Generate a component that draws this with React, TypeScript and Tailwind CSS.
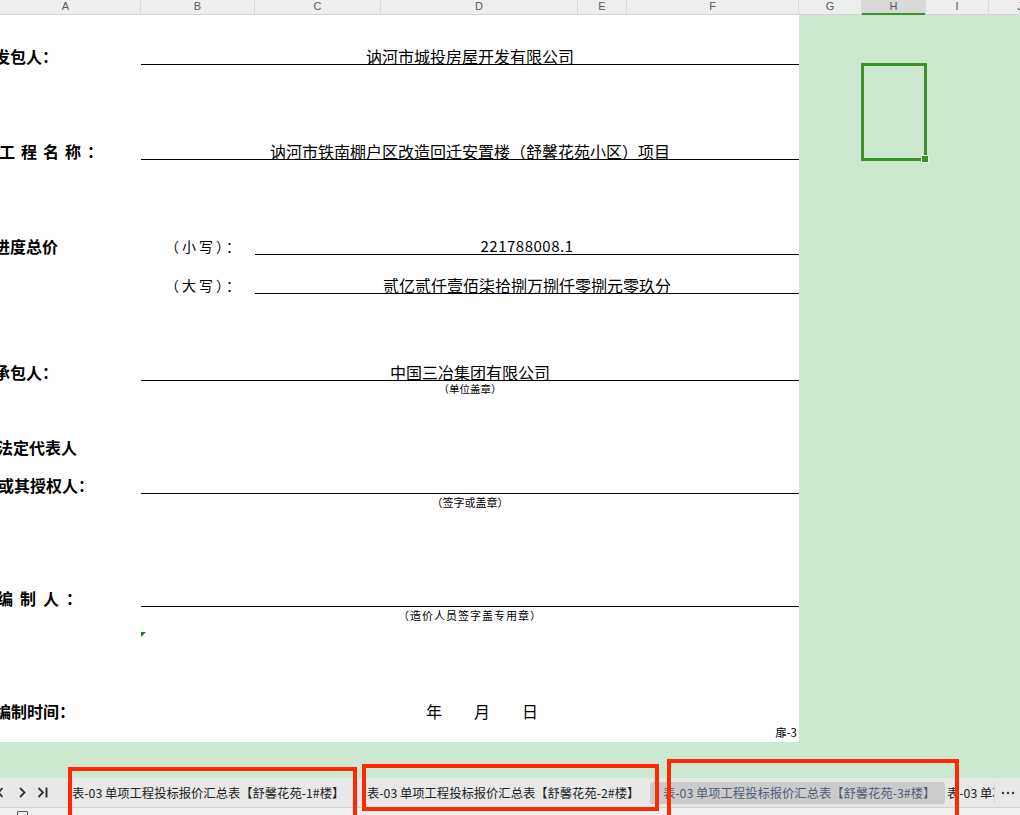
import type { ReactNode } from 'react'

const cjk = "font-['Noto_Sans_CJK_SC','Noto_Sans',sans-serif]"

const columns = [
  { name: 'A', width: 'w-[141px] pr-[9px]' },
  { name: 'B', width: 'w-[114px]' },
  { name: 'C', width: 'w-[126px]' },
  { name: 'D', width: 'w-[197px]' },
  { name: 'E', width: 'w-[49px]' },
  { name: 'F', width: 'w-[172px]' },
  { name: 'G', width: 'w-[63px]' },
  { name: 'H', width: 'w-[64px]', active: true },
  { name: 'I', width: 'w-[63px]' },
  { name: 'J', width: 'w-[63px]' },
]

const tabs = [
  { label: '表-03 单项工程投标报价汇总表【舒馨花苑-1#楼】', box: 'w-[295px] pl-[4px]' },
  { label: '表-03 单项工程投标报价汇总表【舒馨花苑-2#楼】', box: 'w-[283px] pl-[4px] mr-[4px]' },
  {
    label: '表-03 单项工程投标报价汇总表【舒馨花苑-3#楼】',
    box: 'w-[295px] pl-[13px] h-[22px] rounded-[3px] bg-[#cbcbcb] text-[#4f5d78]',
  },
]

function Label({ children }: { children: ReactNode }) {
  return (
    <div className="flex w-[141px] shrink-0 items-end pb-px text-[16px] font-bold leading-[16px] whitespace-nowrap">
      {children}
    </div>
  )
}

function Line({ children }: { children?: ReactNode }) {
  return (
    <div className="flex flex-1 items-end justify-center border-b border-black text-[16px] leading-[16px] whitespace-nowrap">
      {children}
    </div>
  )
}

function Caption({ children, className = '' }: { children: ReactNode; className?: string }) {
  return (
    <div className="flex h-[16px] pl-[141px]">
      <div className={`flex flex-1 items-center justify-center leading-[16px] whitespace-nowrap ${className}`}>
        {children}
      </div>
    </div>
  )
}

function CaseLabel({ children }: { children: ReactNode }) {
  return (
    <div className="flex w-[114px] shrink-0 items-end pb-px pl-[24px] text-[14px] leading-[16px] tracking-[3px] whitespace-nowrap">
      {children}
    </div>
  )
}

function ColumnHeader() {
  return (
    <div className="flex h-[15px] border-b border-[#d4d4d4] bg-[#eeeeee] font-['Liberation_Sans',sans-serif] text-[11px] leading-[12px] text-[#545a66]">
      {columns.map((col) => (
        <div
          key={col.name}
          className={`relative flex shrink-0 justify-center border-r border-[#d9d9d9] ${col.width} ${
            col.active ? 'bg-[#d9d9d9]' : ''
          }`}
        >
          {col.name}
          {col.active ? <div className="absolute right-0 bottom-[-1px] left-0 h-[2px] bg-[#3f8f2a]" /> : null}
        </div>
      ))}
    </div>
  )
}

function SheetBody() {
  return (
    <div className="flex h-[763px] bg-[#cce8cf]">
      <div className={`flex h-[727px] w-[799px] shrink-0 flex-col bg-white text-black ${cjk}`}>
        <div className="flex h-[50px]">
          <Label>
            <span className="-ml-[6px]">发包人：</span>
          </Label>
          <Line>讷河市城投房屋开发有限公司</Line>
        </div>

        <div className="flex h-[95px]">
          <Label>
            <span className="-ml-[1px] tracking-[6px]">工程名称：</span>
          </Label>
          <Line>讷河市铁南棚户区改造回迁安置楼（舒馨花苑小区）项目</Line>
        </div>

        <div className="flex h-[95px]">
          <Label>
            <span className="-ml-[6px]">进度总价</span>
          </Label>
          <CaseLabel>（小写）：</CaseLabel>
          <div className="flex flex-1 items-end justify-center border-b border-black text-[15px] leading-[16px] tracking-[0.5px]">
            221788008.1
          </div>
        </div>

        <div className="flex h-[39px]">
          <div className="w-[141px] shrink-0" />
          <CaseLabel>（大写）：</CaseLabel>
          <Line>贰亿贰仟壹佰柒拾捌万捌仟零捌元零玖分</Line>
        </div>

        <div className="flex h-[87px]">
          <Label>
            <span className="-ml-[6px]">承包人：</span>
          </Label>
          <Line>中国三冶集团有限公司</Line>
        </div>
        <Caption className="text-[10.5px]">（单位盖章）</Caption>

        <div className="flex h-[59px]">
          <Label>
            <span className="-ml-[3px]">法定代表人</span>
          </Label>
        </div>

        <div className="flex h-[38px]">
          <Label>
            <span className="-ml-[2px]">或其授权人：</span>
          </Label>
          <Line />
        </div>
        <Caption className="text-[11px]">（签字或盖章）</Caption>

        <div className="flex h-[97px]">
          <Label>
            <span className="-ml-[3px] tracking-[7px]">编制人：</span>
          </Label>
          <Line />
        </div>
        <Caption className="text-[11px] tracking-[1px]">（造价人员签字盖专用章）</Caption>

        <div className="h-[81px] pt-[9px] pl-[141px]">
          <svg width="5" height="5" viewBox="0 0 5 5">
            <polygon points="0,0 5,0 0,5" fill="#1e7b1e" />
          </svg>
        </div>

        <div className="flex h-[16px]">
          <Label>
            <span className="-ml-[5px]">编制时间：</span>
          </Label>
          <div className="flex items-end gap-[32px] pb-px pl-[285px] text-[16px] leading-[16px]">
            <span>年</span>
            <span>月</span>
            <span>日</span>
          </div>
        </div>

        <div className="flex h-[22px] justify-end pt-[4px] pr-[2px] text-[11.5px] leading-[16px]">扉-3</div>
      </div>

      <div className="flex-1">
        <div className="relative mt-[48px] ml-[62px] h-[98px] w-[66px] border-[3px] border-[#3f8f2a]">
          <div className="absolute right-[-4px] bottom-[-4px] h-[6px] w-[6px] bg-[#3f8f2a] outline outline-1 outline-[#e6f3e6]" />
        </div>
      </div>
    </div>
  )
}

function TabBar() {
  return (
    <div className={`flex h-[29px] items-center bg-[#e8e8e8] text-[12.3px] leading-[16px] text-[#222] ${cjk}`}>
      <div className="w-[68px] shrink-0">
        <svg width="68" height="29" viewBox="0 0 68 29" fill="none" stroke="#333" strokeWidth="1.8">
          <path d="M2.5 10 L-1.5 14.5 L2.5 19" />
          <path d="M20 10 L24.5 14.5 L20 19" />
          <path d="M38.5 10 L43 14.5 L38.5 19" />
          <path d="M46.5 9.5 L46.5 19.5" strokeWidth="2" />
        </svg>
      </div>
      {tabs.map((tab) => (
        <div key={tab.label} className={`flex shrink-0 items-center whitespace-nowrap ${tab.box}`}>
          {tab.label}
        </div>
      ))}
      <div className="w-[49px] shrink-0 overflow-hidden pl-[2px] whitespace-nowrap">表-03 单项工程</div>
      <div className="flex h-[20px] flex-1 items-center justify-center border-l border-[#d6d6d6]">
        <svg width="14" height="4" viewBox="0 0 14 4">
          <circle cx="2" cy="2" r="1.2" fill="#333" />
          <circle cx="7" cy="2" r="1.2" fill="#333" />
          <circle cx="12" cy="2" r="1.2" fill="#333" />
        </svg>
      </div>
    </div>
  )
}

export default function App() {
  return (
    <div className="relative h-[815px] w-[1020px] overflow-hidden bg-[#cce8cf]">
      <ColumnHeader />
      <SheetBody />
      <TabBar />
      <div className="h-[8px] border-t border-[#d2d2d2] bg-[#efefef] pt-[3px] pl-[17px]">
        <div className="h-[10px] w-[11px] rounded-[1px] border border-[#555]" />
      </div>

      <div className="absolute top-[767px] left-[68px] h-[60px] w-[289px] border-4 border-[#ff2800]" />
      <div className="absolute top-[764px] left-[362px] h-[47px] w-[297px] border-4 border-[#ff2800]" />
      <div className="absolute top-[759px] left-[667px] h-[60px] w-[292px] border-4 border-[#ff2800]" />
    </div>
  )
}
